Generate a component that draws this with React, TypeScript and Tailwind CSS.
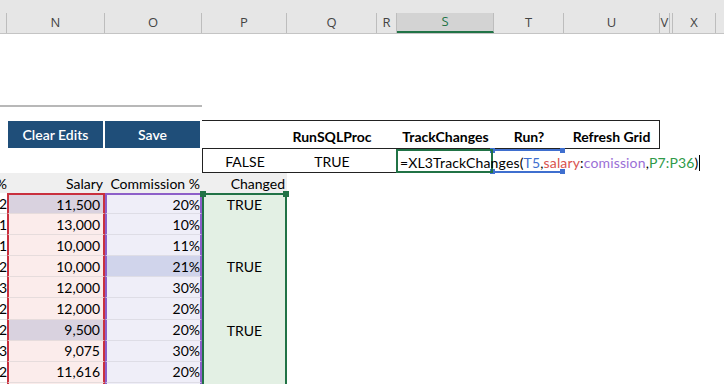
import React from "react";

const headers = [
  { label: "", w: "w-[7px]", sel: false },
  { label: "N", w: "w-[98px]", sel: false },
  { label: "O", w: "w-[97px]", sel: false },
  { label: "P", w: "w-[85px]", sel: false },
  { label: "Q", w: "w-[90px]", sel: false },
  { label: "R", w: "w-[20px]", sel: false },
  { label: "S", w: "w-[97px]", sel: true },
  { label: "T", w: "w-[70px]", sel: false },
  { label: "U", w: "w-[96px]", sel: false },
  { label: "V", w: "w-[10px]", sel: false },
  { label: "", w: "w-[3px]", sel: false },
  { label: "X", w: "w-[43px]", sel: false },
  { label: "", w: "w-[9px]", sel: false },
];

const rows = [
  { m: "2", salary: "11,500", pct: "20%", changed: "TRUE", hiS: true, hiP: false },
  { m: "1", salary: "13,000", pct: "10%", changed: "", hiS: false, hiP: false },
  { m: "1", salary: "10,000", pct: "11%", changed: "", hiS: false, hiP: false },
  { m: "2", salary: "10,000", pct: "21%", changed: "TRUE", hiS: false, hiP: true },
  { m: "3", salary: "12,000", pct: "30%", changed: "", hiS: false, hiP: false },
  { m: "2", salary: "12,000", pct: "20%", changed: "", hiS: false, hiP: false },
  { m: "2", salary: "9,500", pct: "20%", changed: "TRUE", hiS: true, hiP: false },
  { m: "3", salary: "9,075", pct: "30%", changed: "", hiS: false, hiP: false },
  { m: "2", salary: "11,616", pct: "20%", changed: "", hiS: false, hiP: false },
  // next row is only a sliver at the bottom edge
  { m: "", salary: "", pct: "", changed: "", hiS: false, hiP: false },
];

function ColumnHeader() {
  return (
    <div className="flex h-[34px] border-b border-[#c4c4c4] bg-[#e6e6e6] pt-[13px] font-['Open_Sans',sans-serif] text-[13px] text-[#444]">
      {headers.map((h, i) => (
        <div
          key={i}
          className={`${h.w} flex shrink-0 items-center justify-center overflow-hidden border-r border-[#bdbdbd] ${
            h.sel ? "border-b-2 border-b-[#217346] bg-[#d3d3d3] text-[#217346]" : ""
          }`}
        >
          {h.label}
        </div>
      ))}
    </div>
  );
}

function ButtonRow() {
  return (
    <div className="flex h-[29px]">
      <div className="w-[8px] shrink-0" />
      <div className="mt-[1px] flex h-[27px] w-[95px] shrink-0 items-center justify-center bg-[#1f4e79] font-semibold text-white">
        Clear Edits
      </div>
      <div className="w-[2px] shrink-0" />
      <div className="mt-[1px] flex h-[27px] w-[95px] shrink-0 items-center justify-center bg-[#1f4e79] font-semibold text-white">
        Save
      </div>
      <div className="w-[2px] shrink-0" />
      <div className="flex w-[458px] shrink-0 border-y border-r border-[#222] pt-[4px] font-bold">
        <div className="w-[85px] shrink-0" />
        <div className="flex w-[90px] shrink-0 items-center justify-center">RunSQLProc</div>
        <div className="w-[20px] shrink-0" />
        <div className="flex w-[97px] shrink-0 items-center justify-center">TrackChanges</div>
        <div className="flex w-[70px] shrink-0 items-center justify-center">Run?</div>
        <div className="flex w-[95px] shrink-0 items-center justify-center">Refresh Grid</div>
      </div>
    </div>
  );
}

function FormulaRow() {
  return (
    <div className="flex h-[24px]">
      <div className="w-[202px] shrink-0" />
      <div className="flex w-[194px] shrink-0 border-b border-l border-[#222] pt-[2px]">
        <div className="flex w-[84px] shrink-0 items-center justify-center">FALSE</div>
        <div className="flex w-[90px] shrink-0 items-center justify-center">TRUE</div>
      </div>
      <div className="relative z-10 w-[97px] shrink-0 border-2 border-[#217346]">
        <span className="absolute left-[2px] top-[1px] whitespace-nowrap tracking-[0.15px]">
          =XL3TrackChanges(<span className="text-[#3f6fcf]">T5</span>,
          <span className="text-[#d9534f]">salary</span>:
          <span className="text-[#9a6fd6]">comission</span>,
          <span className="text-[#2e9a48]">P7:P36</span>)
          <span className="ml-[1px] inline-block h-[16px] w-[1px] translate-y-[3px] bg-black" />
        </span>
      </div>
      <div className="relative w-[69px] shrink-0 border-y-2 border-[#3f6fcf]">
        <span className="absolute -left-[3px] -top-[3px] h-[5px] w-[5px] bg-[#3f6fcf]" />
        <span className="absolute -right-[3px] -top-[3px] h-[5px] w-[5px] bg-[#3f6fcf]" />
        <span className="absolute -bottom-[3px] -left-[3px] h-[5px] w-[5px] bg-[#3f6fcf]" />
        <span className="absolute -bottom-[3px] -right-[3px] h-[5px] w-[5px] bg-[#3f6fcf]" />
      </div>
    </div>
  );
}

function TableHead() {
  return (
    <div className="flex h-[20px] w-[287px] bg-[#efefef]">
      <div className="flex w-[7px] shrink-0 items-center justify-end overflow-hidden">%</div>
      <div className="flex w-[98px] shrink-0 items-center justify-end pr-[2px]">Salary</div>
      <div className="flex w-[97px] shrink-0 items-center justify-end pr-[2px]">Commission %</div>
      <div className="flex w-[85px] shrink-0 items-center justify-end pr-[2px]">Changed</div>
    </div>
  );
}

export default function App() {
  return (
    <div className="relative h-[384px] w-[724px] overflow-hidden bg-white font-['Lato',sans-serif] text-[14px] text-black">
      <ColumnHeader />
      <div className="h-[71px]" />
      <div className="h-[2px] w-[202px] bg-[#b8b8b8]" />
      <div className="h-[13px]" />
      <ButtonRow />
      <FormulaRow />
      <TableHead />
      {rows.map((r, i) => (
        <div key={i} className="flex h-[21.1px]">
          <div className="flex w-[7px] shrink-0 items-center justify-end overflow-hidden border-b border-[#e2e2e2]">
            {r.m}
          </div>
          <div
            className={`flex w-[98px] shrink-0 items-center justify-end border-x-2 border-x-[#c9303e] border-b border-b-[#e6dcdc] pr-[3px] ${
              i === 0 ? "border-t-2 border-t-[#c9303e]" : ""
            } ${r.hiS ? "bg-[#d9d2df]" : "bg-[#fbeceb]"}`}
          >
            {r.salary}
          </div>
          <div
            className={`flex w-[97px] shrink-0 items-center justify-end border-x-2 border-x-[#8d5fc9] border-b border-b-[#dedde6] ${
              i === 0 ? "border-t-2 border-t-[#8d5fc9]" : ""
            } ${r.hiP ? "bg-[#d0d4eb]" : "bg-[#efeef8]"}`}
          >
            {r.pct}
          </div>
          <div
            className={`relative flex w-[85px] shrink-0 items-center justify-center border-x-2 border-[#217346] bg-[#e3f0e4] ${
              i === 0 ? "border-t-2" : ""
            }`}
          >
            {r.changed}
            {i === 0 && (
              <>
                <span className="absolute -left-[4px] -top-[4px] h-[6px] w-[6px] bg-[#217346]" />
                <span className="absolute -right-[4px] -top-[4px] h-[6px] w-[6px] bg-[#217346]" />
              </>
            )}
          </div>
        </div>
      ))}
    </div>
  );
}
